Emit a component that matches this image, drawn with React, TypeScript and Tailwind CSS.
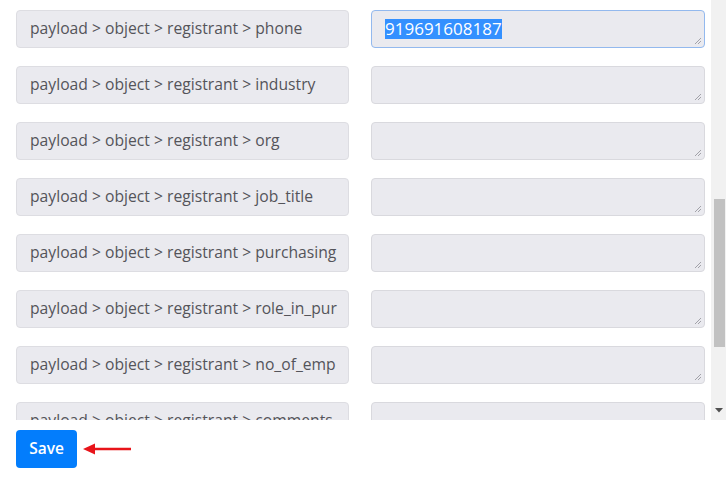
import React from "react";

const fields = [
  { label: "payload > object > registrant > phone", value: "919691608187" },
  { label: "payload > object > registrant > industry", value: "" },
  { label: "payload > object > registrant > org", value: "" },
  { label: "payload > object > registrant > job_title", value: "" },
  { label: "payload > object > registrant > purchasing", value: "" },
  { label: "payload > object > registrant > role_in_pur", value: "" },
  { label: "payload > object > registrant > no_of_emp", value: "" },
  { label: "payload > object > registrant > comments", value: "" },
];

function Grip() {
  return (
    <svg className="absolute right-[2px] bottom-[2px]" width="9" height="9" viewBox="0 0 9 9">
      <line x1="8" y1="2" x2="2" y2="8" stroke="#9a9aa0" strokeWidth="0.9" />
      <line x1="8" y1="5" x2="5" y2="8" stroke="#9a9aa0" strokeWidth="0.9" />
    </svg>
  );
}

export default function App() {
  return (
    <div
      className="w-[726px] h-[500px] bg-white flex flex-col"
      style={{ fontFamily: "'Open Sans', Lato, sans-serif" }}
    >
      <div className="flex h-[420px] overflow-hidden">
        <div className="flex-1 pl-4 pr-[6px] pt-[10px] flex flex-col gap-[18px]">
          {fields.map((f, i) => (
            <div key={i} className="grid grid-cols-[333px_334px] gap-[22px] shrink-0 h-[38px]">
              <div className="h-[38px] rounded-[4px] bg-[#eaeaef] border border-[#dddde2] pl-[13px] flex items-center overflow-hidden whitespace-nowrap text-[15.7px] text-[#54545a]">
                {f.label}
              </div>
              <div
                className={
                  "relative h-[38px] rounded-[4px] bg-[#eaeaef] border pl-[13px] pt-[8px] text-[17px] leading-[20px] " +
                  (i === 0 ? "border-[#93b9ee]" : "border-[#d9d9de]")
                }
              >
                {f.value && (
                  <span className="bg-[#3390ff] text-white inline-block">{f.value}</span>
                )}
                <Grip />
              </div>
            </div>
          ))}
        </div>
        <div className="w-[15px] h-full bg-[#f1f1f1] flex flex-col items-center">
          <div className="h-[199px] shrink-0" />
          <div className="w-[11px] ml-[1px] h-[148px] bg-[#c1c1c1]" />
          <div className="flex-1" />
          <svg width="8" height="5" viewBox="0 0 8 5" className="mb-[7px]">
            <polygon points="0,0 8,0 4,4.5" fill="#505050" />
          </svg>
        </div>
      </div>
      <div className="flex items-center pl-4 pt-[10px] gap-[6px]">
        <button className="w-[61px] h-[38px] rounded-[4px] bg-[#037dfc] text-white text-[15.5px] font-semibold">
          Save
        </button>
        <svg width="50" height="12" viewBox="0 0 50 12">
          <line x1="8" y1="6" x2="48" y2="6" stroke="#e8141a" strokeWidth="2.5" />
          <polygon points="0,6 12,0.5 12,11.5" fill="#e8141a" />
        </svg>
      </div>
    </div>
  );
}
